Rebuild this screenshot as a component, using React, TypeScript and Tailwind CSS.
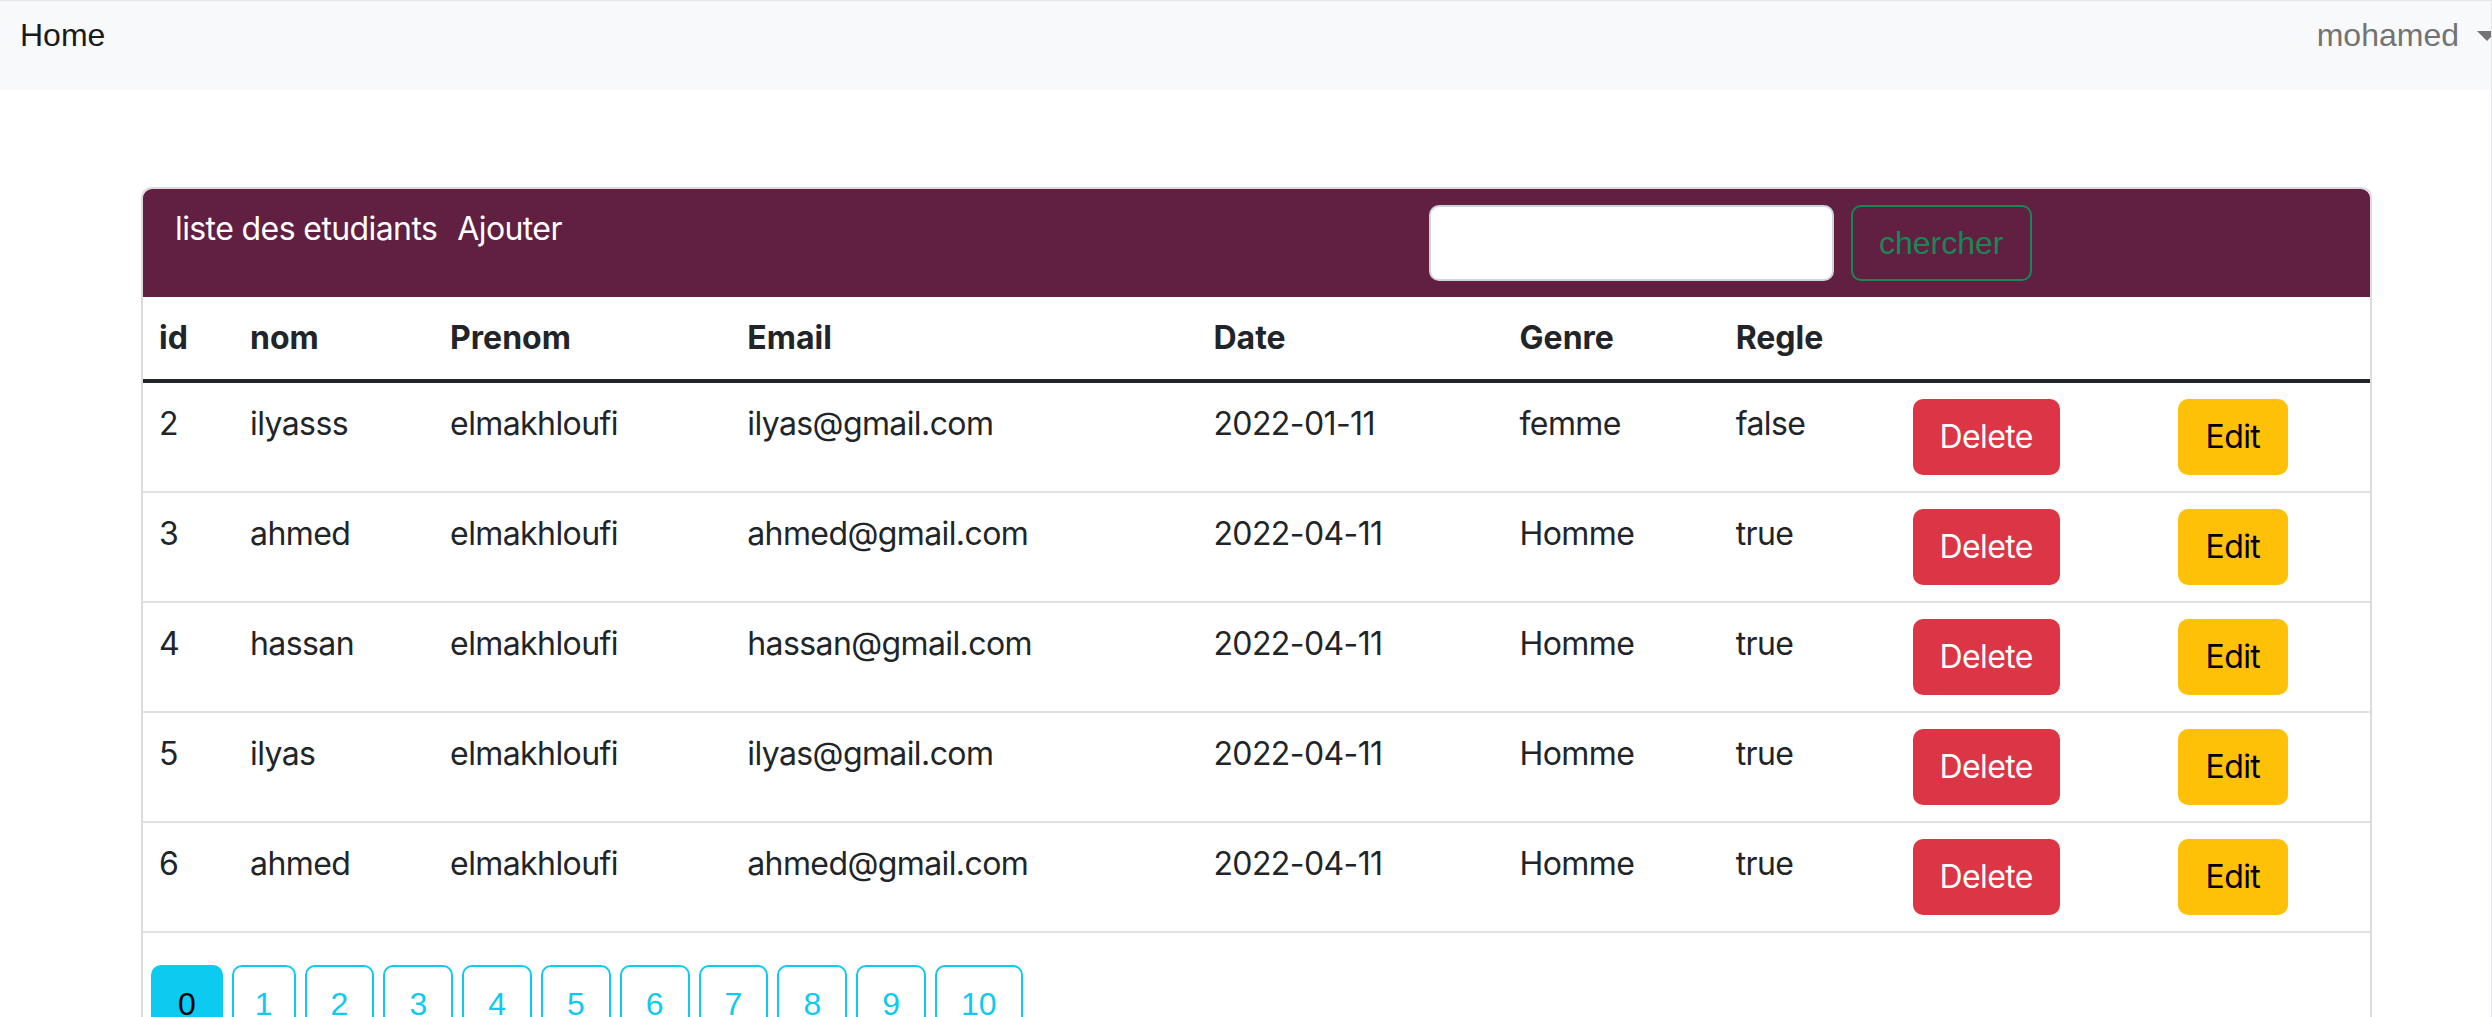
const ETUDIANTS = [
  { id: 2, nom: 'ilyasss', prenom: 'elmakhloufi', email: 'ilyas@gmail.com', date: '2022-01-11', genre: 'femme', regle: 'false' },
  { id: 3, nom: 'ahmed', prenom: 'elmakhloufi', email: 'ahmed@gmail.com', date: '2022-04-11', genre: 'Homme', regle: 'true' },
  { id: 4, nom: 'hassan', prenom: 'elmakhloufi', email: 'hassan@gmail.com', date: '2022-04-11', genre: 'Homme', regle: 'true' },
  { id: 5, nom: 'ilyas', prenom: 'elmakhloufi', email: 'ilyas@gmail.com', date: '2022-04-11', genre: 'Homme', regle: 'true' },
  { id: 6, nom: 'ahmed', prenom: 'elmakhloufi', email: 'ahmed@gmail.com', date: '2022-04-11', genre: 'Homme', regle: 'true' },
];

const COLONNES = ['id', 'nom', 'Prenom', 'Email', 'Date', 'Genre', 'Regle', '', ''];
const LARGEURS = ['w-[91px]', 'w-[200px]', 'w-[297px]', 'w-[466px]', 'w-[306px]', 'w-[216px]', 'w-[177px]', 'w-[265px]', 'w-[208px]'];
const PAGES = [0, 1, 2, 3, 4, 5, 6, 7, 8, 9, 10];

const ARIAL = "font-['Liberation_Sans',Arial,sans-serif]";

function pageClass(p: number) {
  if (p === 0) return 'h-[76px] rounded-[10px] border-2 border-[#0dcaf0] bg-[#0dcaf0] px-[25px] pt-[2px] text-black';
  if (p === 1) return 'h-[76px] rounded-[10px] border-2 border-[#0dcaf0] px-[21px] pt-[2px] text-[#0dcaf0]';
  return 'h-[76px] rounded-[10px] border-2 border-[#0dcaf0] px-[24px] pt-[2px] text-[#0dcaf0]';
}

function Navbar() {
  return (
    <nav className={`flex h-[90px] items-start justify-between overflow-hidden border-t border-[#e3e5e8] bg-[#f8f9fa] pt-[10px] text-[32px] leading-[48px] ${ARIAL}`}>
      <span className="pl-[20px] text-[#1a1a1a]">Home</span>
      <span className="-mr-[6px] flex items-center text-[#737373]">
        mohamed
        <span className="ml-[18px] mt-[2px] h-0 w-0 border-x-[10px] border-t-[10px] border-x-transparent border-t-[#737373]" />
      </span>
    </nav>
  );
}

function CardHeader() {
  return (
    <div className="flex h-[108px] items-start rounded-t-[9px] bg-[#611f42] py-[16px] pl-[32px]">
      <div className="flex w-[1254px] gap-[20px] text-[32px] leading-[48px] tracking-[-0.6px] text-white">
        <span>liste des etudiants</span>
        <span>Ajouter</span>
      </div>
      <div className="flex gap-[17px]">
        <input className="h-[76px] w-[405px] rounded-[10px] border-2 border-[#ced4da] bg-white px-[24px] text-[32px] outline-none" />
        <button className={`h-[76px] rounded-[10px] border-2 border-[#198754] px-[26px] text-[32px] leading-[48px] text-[#198754] ${ARIAL}`}>
          chercher
        </button>
      </div>
    </div>
  );
}

export default function App() {
  return (
    <div className="min-h-screen border-r border-[#e3e5e8] bg-white font-['Inter',sans-serif] text-[#212529]">
      <Navbar />
      <div className="ml-[141px] mt-[97px] w-[2231px] rounded-[10px] border-2 border-[#dcdcdc] pb-[60px]">
        <CardHeader />
        <table className="w-full table-fixed border-collapse text-[32px] leading-[48px]">
          <colgroup>
            {LARGEURS.map((w, i) => (
              <col key={i} className={w} />
            ))}
          </colgroup>
          <thead>
            <tr className="border-b-4 border-[#212529]">
              {COLONNES.map((c, i) => (
                <th key={i} className="h-[82px] px-4 pt-[17px] pb-[17px] text-left align-top font-bold">
                  {c}
                </th>
              ))}
            </tr>
          </thead>
          <tbody className="tracking-[-0.6px]">
            {ETUDIANTS.map((e) => (
              <tr key={e.id} className="border-b-2 border-[#dee2e6]">
                <td className="px-4 pt-[17px] pb-4 align-top">{e.id}</td>
                <td className="px-4 pt-[17px] pb-4 align-top">{e.nom}</td>
                <td className="px-4 pt-[17px] pb-4 align-top">{e.prenom}</td>
                <td className="px-4 pt-[17px] pb-4 align-top">{e.email}</td>
                <td className="px-4 pt-[17px] pb-4 align-top">{e.date}</td>
                <td className="px-4 pt-[17px] pb-4 align-top">{e.genre}</td>
                <td className="px-4 pt-[17px] pb-4 align-top">{e.regle}</td>
                <td className="p-4 align-top">
                  <button className="h-[76px] w-[147px] rounded-[10px] bg-[#dc3545] text-white">Delete</button>
                </td>
                <td className="p-4 align-top">
                  <button className="h-[76px] w-[110px] rounded-[10px] bg-[#ffc107] text-black">Edit</button>
                </td>
              </tr>
            ))}
          </tbody>
        </table>
        <div className={`flex gap-[9px] pl-[8px] pt-[32px] text-[32px] leading-[48px] ${ARIAL}`}>
          {PAGES.map((p) => (
            <button key={p} className={pageClass(p)}>
              {p}
            </button>
          ))}
        </div>
      </div>
    </div>
  );
}
